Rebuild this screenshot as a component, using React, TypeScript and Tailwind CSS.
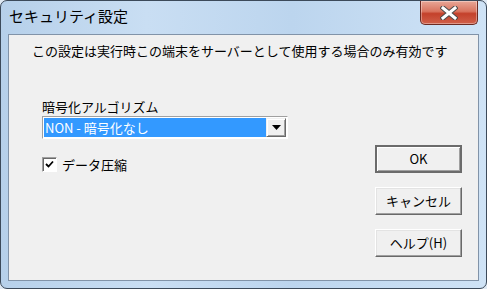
const jp = "font-['Meiryo_UI','Noto_Sans_CJK_JP',sans-serif]";

function CloseButton() {
  return (
    <div className="flex h-[24px] w-[58px] items-center justify-center rounded-b-[5px] border border-t-0 border-[#6b2a22] bg-[linear-gradient(180deg,#e9a797_0%,#d9745f_45%,#c4412b_55%,#d0604a_100%)] shadow-[inset_0_0_0_1px_rgba(255,255,255,0.35)]">
      <svg width="18" height="14" viewBox="0 0 18 14">
        <path
          d="M3 2 L15 12 M15 2 L3 12"
          stroke="#4b4b4b"
          strokeWidth="5"
          strokeLinecap="square"
        />
        <path
          d="M3 2 L15 12 M15 2 L3 12"
          stroke="#ffffff"
          strokeWidth="3"
          strokeLinecap="square"
        />
      </svg>
    </div>
  );
}

function WinButton({
  label,
  isDefault,
}: {
  label: React.ReactNode;
  isDefault?: boolean;
}) {
  return (
    <button
      type="button"
      className={`flex h-[28px] w-[87px] items-center justify-center bg-[#f0f0f0] text-[13px] text-black ${
        isDefault
          ? "border-2 border-[#6b6b6b] shadow-[inset_1px_1px_0_#ffffff,inset_-1px_-1px_0_#a0a0a0]"
          : "border border-t-[#ffffff] border-l-[#ffffff] border-r-[#696969] border-b-[#696969] shadow-[inset_-1px_-1px_0_#a0a0a0,inset_1px_1px_0_#e3e3e3]"
      }`}
    >
      {label}
    </button>
  );
}

export default function App() {
  return (
    <div className={`h-[289px] w-[487px] bg-[#dfe9f3] ${jp}`}>
      <div className="flex h-full w-full flex-col rounded-[7px] border border-[#3c4a5a] bg-[linear-gradient(90deg,#b6d0ea_0%,#c9def3_30%,#bcd5ee_60%,#cfe3f6_100%)]">
        <div className="flex h-[33px] items-start justify-between pl-[8px] pr-[8px]">
          <div className="pt-[4px] text-[15px] leading-[22px] text-black">
            セキュリティ設定
          </div>
          <CloseButton />
        </div>
        <div className="mx-[7px] flex h-[247px] flex-col border border-[#8193a8] bg-[#f0f0f0]">
          <div className="pl-[23px] pt-[7px] text-[13px] leading-[17px] text-black">
            この設定は実行時この端末をサーバーとして使用する場合のみ有効です
          </div>
          <div className="flex">
            <div className="flex flex-col pl-[33px] pt-[39px]">
              <div className="text-[13px] leading-[17px] text-black">
                暗号化アルゴリズム
              </div>
              <div className="mt-[1px] flex h-[23px] w-[246px] border border-t-[#a0a0a0] border-l-[#a0a0a0] border-r-[#ffffff] border-b-[#ffffff] bg-white p-[1px]">
                <div className="flex flex-1 items-center bg-[#3399ff] pl-[1px] text-[13px] leading-[17px] text-white">
                  NON - 暗号化なし
                </div>
                <div className="flex w-[20px] items-center justify-center border border-t-[#f0f0f0] border-l-[#f0f0f0] border-r-[#696969] border-b-[#696969] bg-[#f0f0f0] shadow-[inset_1px_1px_0_#ffffff,inset_-1px_-1px_0_#a0a0a0]">
                  <svg width="9" height="5" viewBox="0 0 9 5">
                    <path d="M0 0 H9 L4.5 5 Z" fill="#000" />
                  </svg>
                </div>
              </div>
              <div className="mt-[17px] flex items-center gap-[5px]">
                <div className="flex h-[15px] w-[15px] items-center justify-center border border-t-[#a0a0a0] border-l-[#a0a0a0] border-r-[#ffffff] border-b-[#ffffff] bg-white shadow-[inset_1px_1px_0_#696969]">
                  <svg width="9" height="9" viewBox="0 0 9 9">
                    <path
                      d="M1 4 L3.5 6.5 L8 1.5"
                      stroke="#000"
                      strokeWidth="1.8"
                      fill="none"
                    />
                  </svg>
                </div>
                <span className="text-[13px] leading-[17px] text-black">
                  データ圧縮
                </span>
              </div>
            </div>
            <div className="ml-auto mr-[16px] flex flex-col gap-[14px] pt-[86px]">
              <WinButton label="OK" isDefault />
              <WinButton label="キャンセル" />
              <WinButton label="ヘルプ(H)" />
            </div>
          </div>
        </div>
      </div>
    </div>
  );
}
